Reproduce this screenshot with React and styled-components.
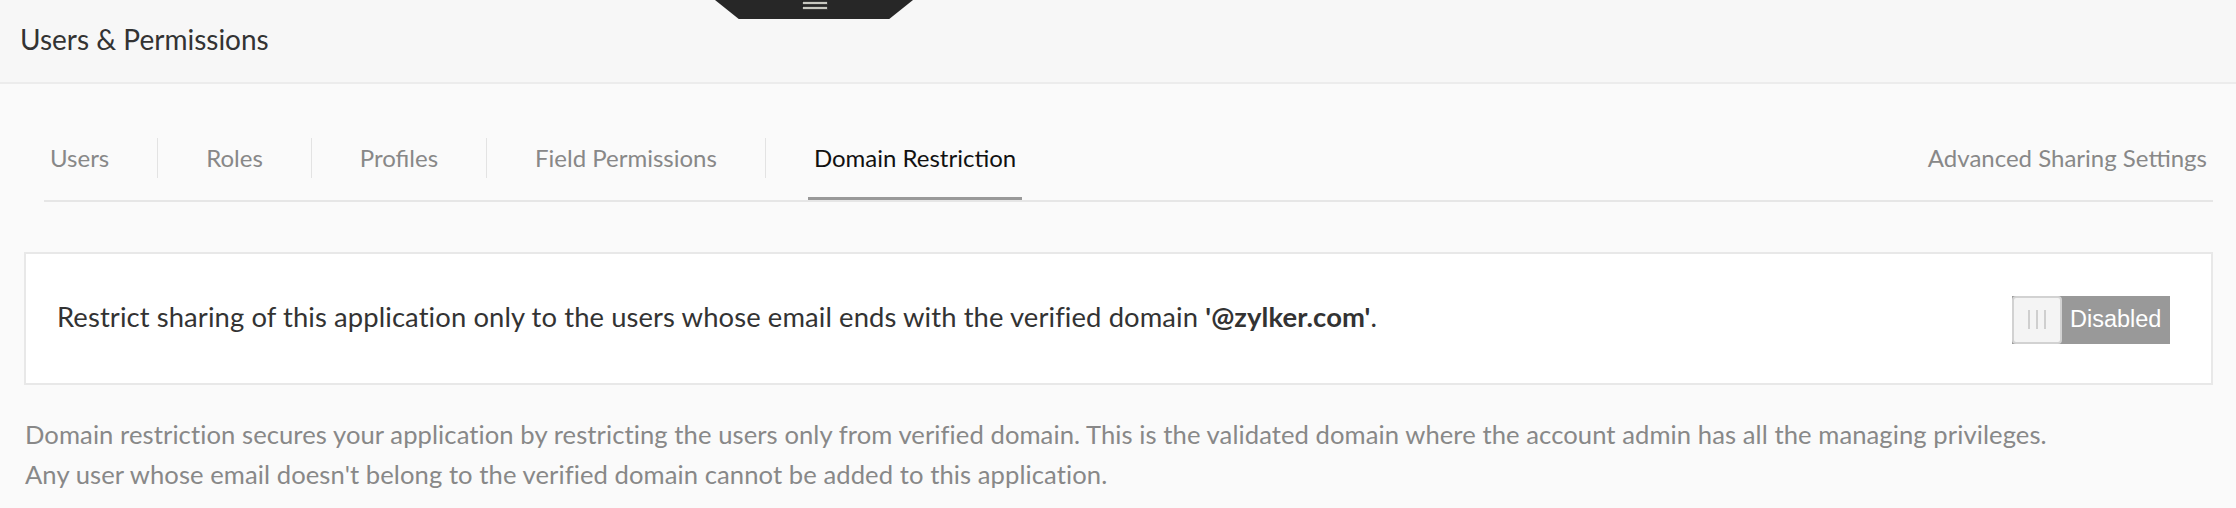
import React from 'react';
import styled, { createGlobalStyle } from 'styled-components';

const GlobalStyle = createGlobalStyle`
  html, body {
    margin: 0;
    padding: 0;
    background: #fafafa;
  }
  body {
    font-family: Lato, "Open Sans", sans-serif;
  }
`;

const tabs = ['Users', 'Roles', 'Profiles', 'Field Permissions', 'Domain Restriction'];
const activeTab = 'Domain Restriction';

export default function App() {
  return (
    <Page>
      <GlobalStyle />
      <Header>
        <Title>Users &amp; Permissions</Title>
        <MenuHandle>
          <svg width="26" height="12" viewBox="0 0 26 12">
            <rect x="0.5" y="1.5" width="25" height="3" fill="#c8c8c0" stroke="#111" strokeWidth="0.6" />
            <rect x="0.5" y="6.5" width="25" height="3" fill="#c8c8c0" stroke="#111" strokeWidth="0.6" />
          </svg>
        </MenuHandle>
      </Header>

      <Content>
        <TabBar>
          <TabList>
            {tabs.map((tab, i) => (
              <React.Fragment key={tab}>
                {i > 0 && <Divider />}
                <Tab active={tab === activeTab}>{tab}</Tab>
              </React.Fragment>
            ))}
          </TabList>
          <Tab>Advanced Sharing Settings</Tab>
        </TabBar>

        <Card>
          <CardText>
            Restrict sharing of this application only to the users whose email ends with the verified domain <strong>'@zylker.com'</strong>.
          </CardText>
          <Toggle>
            <Knob>
              <Grip />
              <Grip />
              <Grip />
            </Knob>
            <ToggleLabel>Disabled</ToggleLabel>
          </Toggle>
        </Card>

        <Description>
          Domain restriction secures your application by restricting the users only from verified domain. This is the validated domain where the account admin has all the managing privileges.
          <br />
          Any user whose email doesn't belong to the verified domain cannot be added to this application.
        </Description>
      </Content>
    </Page>
  );
}

const Page = styled.div`
  min-height: 508px;
`;

const Header = styled.header`
  position: relative;
  height: 82px;
  display: flex;
  align-items: center;
  padding-left: 20px;
  background: #f7f7f7;
  border-bottom: 2px solid #ececec;
`;

const Title = styled.h1`
  margin: 0 0 4px 0;
  font-size: 28px;
  font-weight: 400;
  color: #333;
`;

const MenuHandle = styled.div`
  position: absolute;
  top: 0;
  left: 715px;
  width: 198px;
  height: 19px;
  background: #272727;
  clip-path: polygon(0 0, 100% 0, 88% 100%, 12% 100%);
  display: flex;
  justify-content: center;
  align-items: flex-start;
  padding-left: 2px;
  box-sizing: border-box;
`;

const Content = styled.main`
  padding: 0 23px 0 24px;
`;

const TabBar = styled.nav`
  display: flex;
  justify-content: space-between;
  align-items: stretch;
  margin: 34px 0 0 20px;
  border-bottom: 2px solid #e6e6e6;
`;

const TabList = styled.div`
  display: flex;
  align-items: center;
`;

const Tab = styled.div`
  height: 79px;
  display: flex;
  align-items: center;
  padding: 0 6px;
  font-size: 24px;
  color: ${props => (props.active ? '#111' : '#888')};
  border-bottom: 3px solid ${props => (props.active ? '#999' : 'transparent')};
  white-space: nowrap;
`;

const Divider = styled.span`
  width: 1px;
  height: 40px;
  margin: 0 42px 3px 42px;
  background: #e3e3e3;
`;

const Card = styled.section`
  margin-top: 50px;
  height: 129px;
  display: flex;
  align-items: center;
  justify-content: space-between;
  padding: 0 41px 0 31px;
  background: #fff;
  border: 2px solid #e8e8e8;
`;

const CardText = styled.p`
  margin: 0 0 4px 0;
  font-size: 27.4px;
  letter-spacing: 0.1px;
  color: #333;

  strong {
    font-weight: 700;
  }
`;

const Toggle = styled.div`
  display: flex;
  align-items: center;
  width: 158px;
  height: 48px;
  background: #999;
  margin-top: 2px;
`;

const Knob = styled.div`
  box-sizing: border-box;
  width: 50px;
  height: 48px;
  display: flex;
  justify-content: center;
  align-items: center;
  gap: 6px;
  background: #f4f4f4;
  border: 2px solid #d2d2d2;
  border-radius: 4px;
`;

const Grip = styled.span`
  width: 2px;
  height: 19px;
  background: #cfcfcf;
`;

const ToggleLabel = styled.span`
  margin-left: 8px;
  font-family: "Liberation Sans", Arial, sans-serif;
  font-size: 23.5px;
  color: #fff;
`;

const Description = styled.p`
  margin: 29px 0 0 1px;
  font-size: 25.6px;
  letter-spacing: 0.08px;
  line-height: 40px;
  color: #888;
`;
